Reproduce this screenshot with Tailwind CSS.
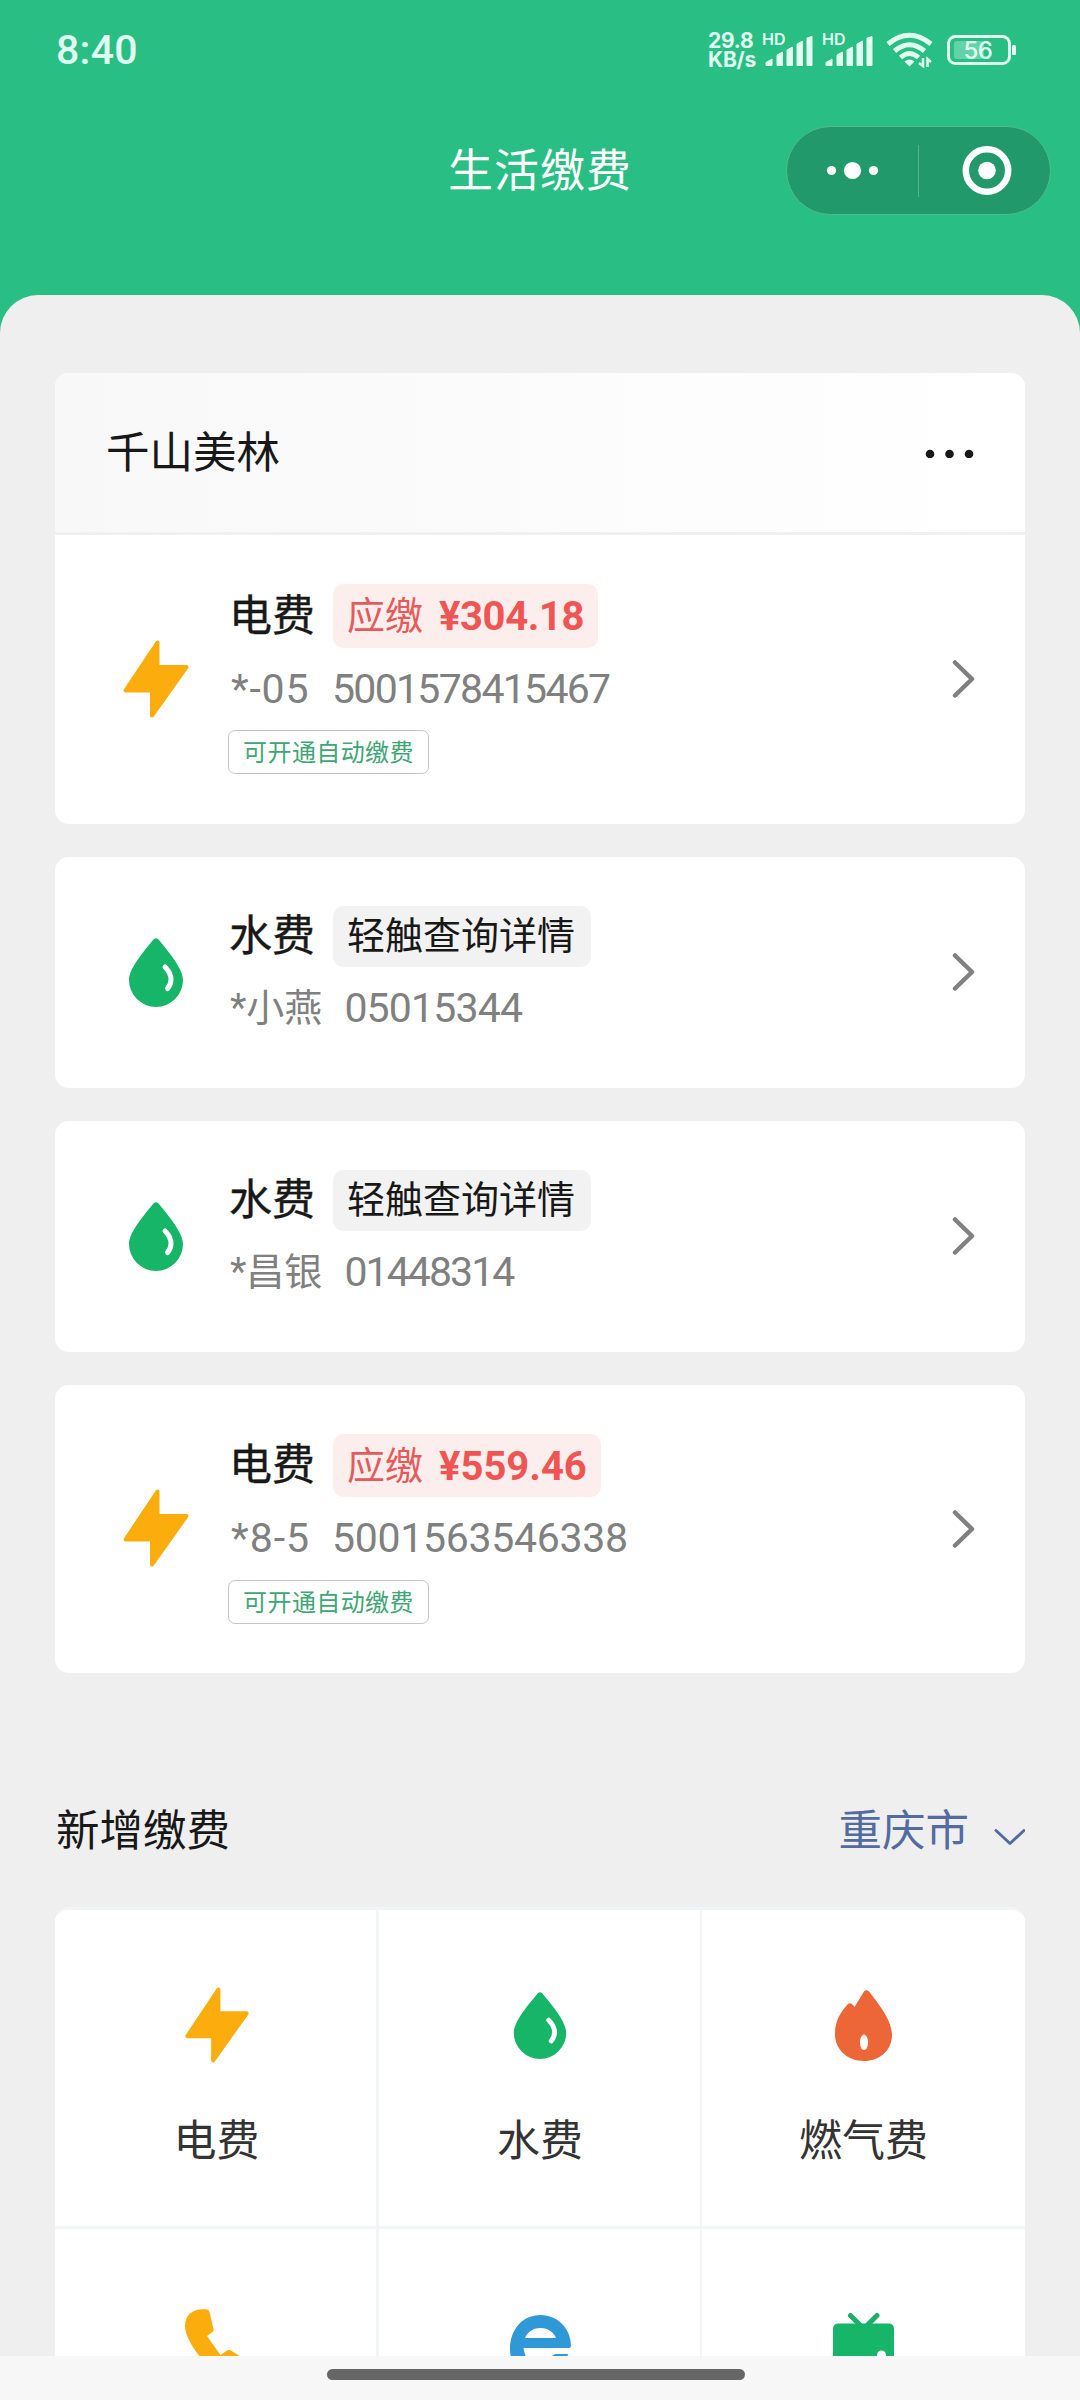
<!DOCTYPE html>
<html lang="zh-CN">
<head>
<meta charset="utf-8">
<title>生活缴费</title>
<script src="https://cdn.jsdelivr.net/npm/@tailwindcss/browser@4"></script>
</head>
<body class="w-[1080px] h-[2400px] overflow-hidden bg-[#29be83] font-[Roboto,'Noto_Sans_CJK_SC',sans-serif] text-[#181818]">
<svg class="hidden">
  <symbol id="bolt" viewBox="0 0 66 78">
    <path d="M34.5 2.5V27H63.5L29 75.5V50.5H2.5Z" fill="#fbad0e" stroke="#fbad0e" stroke-width="4" stroke-linejoin="round"/>
  </symbol>
  <symbol id="drop" viewBox="0 0 54 69">
    <path d="M24.5 1.5Q27-1 29.500 1.500C38 12 54 30 54 42A27 27 0 0 1 0 42C0 30 16 12 24.500 1.500Z" fill="#17b567"/>
    <path d="M36 29Q42 35 42 41.500Q42 46.500 38.500 50.500" fill="none" stroke="#fff" stroke-width="5" stroke-linecap="round"/>
  </symbol>
  <symbol id="flame" viewBox="0 0 57 71">
    <path d="M12.500 14.500Q15.500 12 18 15L19.500 17L29 1.500Q31.500-1 34 1.500C41 11 57 29 57 45C57 61 44 71 29 71C13 71 0 60 0 44C0 31 5 23 12.500 14.500Z" fill="#ec6637"/>
    <path d="M29 44.500C31.500 45 33 48.500 33 52.500S31.500 60 29 60S25 56.500 25 52.500S26.500 45 29 44.500Z" fill="#fff"/>
  </symbol>
  <symbol id="chevron" viewBox="0 0 24 40">
    <path d="M3 3.500L20 20L3 36.500" fill="none" stroke="#808080" stroke-width="4.500" stroke-linecap="round" stroke-linejoin="round"/>
  </symbol>
  <symbol id="signal" viewBox="0 0 48 30">
    <path d="M1 29.500V26.500L7 23V29.500ZM12 29.500V19L17.500 16V29.500ZM22 29.500V14L27.500 11V29.500ZM32 29.500V8L37.500 5V29.500ZM42 29.500V2L47 .5V29.500Z" fill="#e0fff2" stroke="#e0fff2" stroke-width="1" stroke-linejoin="round"/>
  </symbol>
</svg>

<!-- Status bar -->
<header class="h-[295px] flex flex-col text-[#e0fff2]">
  <div class="h-[100px] flex items-center pl-[56px] pr-[63px]">
    <span class="text-[41px] leading-[40px] font-medium tracking-[0.300px]">8:40</span>
    <div class="ml-auto flex items-center">
      <div class="w-[54px] font-[Inter,sans-serif] text-[21px] leading-[19px] font-bold tracking-[-0.2px]"><div>29.8</div><div>KB/s</div></div>
      <div class="relative w-[60px] h-[32px]">
        <span class="absolute left-0 top-[-1px] font-[Inter,sans-serif] text-[16px] leading-[13px] font-semibold">HD</span>
        <svg class="absolute left-[3px] top-[2px] w-[48px] h-[30px]"><use href="#signal"/></svg>
      </div>
      <div class="relative w-[60px] h-[32px]">
        <span class="absolute left-0 top-[-1px] font-[Inter,sans-serif] text-[16px] leading-[13px] font-semibold">HD</span>
        <svg class="absolute left-[3px] top-[2px] w-[48px] h-[30px]"><use href="#signal"/></svg>
      </div>
      <svg class="w-[47px] h-[36px] ml-[4px]" viewBox="0 0 47 36" fill="none" stroke="#e0fff2" stroke-width="5">
        <path d="M2 12Q23.500-5.500 45 12M8.500 19Q23.500 6.500 38.500 19M14.500 25.500Q23.500 17.500 32.500 25.500"/>
        <path d="M18.500 29.500Q23.500 25.500 28.500 29.500L23.500 34.500Z" fill="#e0fff2" stroke="none"/>
        <path d="M37 26V34L33 31M41.500 35V27L45 30" stroke-width="2.500"/>
      </svg>
      <div class="relative w-[70px] h-[32px] ml-[14px]">
        <svg class="w-[70px] h-[32px]" viewBox="0 0 70 32">
          <rect x="1.500" y="2.500" width="61" height="27" rx="7" fill="none" stroke="#e0fff2" stroke-width="3"/>
          <rect x="7" y="7" width="30" height="18" rx="3" fill="#e0fff2" fill-opacity=".32"/>
          <rect x="65" y="11" width="4" height="10" rx="1.500" fill="#e0fff2"/>
        </svg>
        <span class="absolute left-[9px] top-0 w-[44px] text-center font-[Inter,sans-serif] text-[24px] leading-[33px] font-medium tracking-[-0.500px]">56</span>
      </div>
    </div>
  </div>
  <!-- Navigation bar -->
  <div class="h-[141px] grid grid-cols-3 items-center text-white">
    <div></div>
    <h1 class="text-center text-[45px] leading-[60px] tracking-[1px] whitespace-nowrap pt-[2px]">生活缴费</h1>
    <div class="justify-self-end mr-[29px] w-[265px] h-[89px] rounded-full bg-[#22996a] border border-[#4fbc8f] flex items-center">
      <svg class="w-[131px] h-[60px]" viewBox="0 0 131 60" fill="#fff"><circle cx="44.500" cy="29.500" r="4.600"/><circle cx="65.500" cy="29.500" r="8.600"/><circle cx="86.500" cy="29.500" r="4.600"/></svg>
      <div class="w-px h-[52px] bg-[#4fb58c]"></div>
      <svg class="w-[131px] h-[60px]" viewBox="0 0 131 60"><circle cx="68" cy="29.500" r="21.200" fill="none" stroke="#fff" stroke-width="6.500"/><circle cx="68" cy="29.500" r="8.800" fill="#fff"/></svg>
    </div>
  </div>
</header>

<main class="h-[2061px] overflow-hidden rounded-t-[38px] bg-[#efefef] px-[55px] pt-[78px]">
  <div class="flex flex-col gap-[33px]">
    <!-- Household -->
    <section class="rounded-[14px] bg-white overflow-hidden">
      <div class="h-[162px] flex items-center justify-between pl-[51px] pr-[51px] bg-linear-to-r from-[#f8f8f8] to-white border-b-[3px] border-[#f0f0f0]">
        <h2 class="text-[43.500px] leading-[60px] pt-[2px]">千山美林</h2>
        <svg class="w-[49px] h-[10px]" viewBox="0 0 49 10" fill="#181818"><circle cx="5" cy="6" r="4.300"/><circle cx="24.500" cy="6" r="4.300"/><circle cx="44" cy="6" r="4.300"/></svg>
      </div>
      <div class="h-[289px] flex items-center pr-[49px]">
        <svg class="w-[66px] h-[78px] ml-[68px] mb-[2px]"><use href="#bolt"/></svg>
        <div class="ml-[39px] self-start pt-[49px]">
          <div class="h-[64px] flex items-center gap-[18px]">
            <span class="text-[43px] leading-[64px] pl-px [-webkit-text-stroke:0.4px_#181818]">电费</span>
            <span class="h-[64px] w-[265px] rounded-[10px] bg-[#fdeeee] px-[14px] text-[38px] leading-[65px] text-[#e35b5a] flex"><span>应缴</span><span class="ml-[16px] text-[40px] font-bold text-[#ef5552] tracking-[-0.400px]">¥304.18</span></span>
          </div>
          <div class="h-[48px] mt-[17px] pl-[3px] flex text-[41px] leading-[48px] text-[#808080]"><span class="w-[101px] tracking-[0.800px]">*-05</span><span class="tracking-[-1.700px]">5001578415467</span></div>
          <div class="mt-[17px] w-[201px] h-[44px] rounded-[7px] border border-[#c6c6c6] text-center text-[24px] leading-[44px] tracking-[0.400px] text-[#3fa675]">可开通自动缴费</div>
        </div>
        <svg class="w-[24px] h-[40px] ml-auto mb-[2px]"><use href="#chevron"/></svg>
      </div>
    </section>

    <section class="h-[231px] rounded-[14px] bg-white flex items-center pr-[49px]">
      <svg class="w-[54px] h-[69px] ml-[74px]"><use href="#drop"/></svg>
      <div class="ml-[45px] self-start pt-[49px]">
        <div class="h-[61px] flex items-center gap-[18px]">
          <span class="text-[43px] leading-[61px] pl-px [-webkit-text-stroke:0.4px_#181818]">水费</span>
          <span class="h-[61px] w-[258px] rounded-[10px] bg-[#f2f2f2] pl-[14px] text-[38px] leading-[61px]">轻触查询详情</span>
        </div>
        <div class="h-[48px] mt-[17px] pl-[2px] flex gap-[22px] text-[38px] leading-[48px] text-[#808080]"><span>*小燕</span><span class="text-[41px] tracking-[-0.800px]">05015344</span></div>
      </div>
      <svg class="w-[24px] h-[40px] ml-auto mb-[2px]"><use href="#chevron"/></svg>
    </section>

    <section class="h-[231px] rounded-[14px] bg-white flex items-center pr-[49px]">
      <svg class="w-[54px] h-[69px] ml-[74px]"><use href="#drop"/></svg>
      <div class="ml-[45px] self-start pt-[49px]">
        <div class="h-[61px] flex items-center gap-[18px]">
          <span class="text-[43px] leading-[61px] pl-px [-webkit-text-stroke:0.4px_#181818]">水费</span>
          <span class="h-[61px] w-[258px] rounded-[10px] bg-[#f2f2f2] pl-[14px] text-[38px] leading-[61px]">轻触查询详情</span>
        </div>
        <div class="h-[48px] mt-[17px] pl-[2px] flex gap-[22px] text-[38px] leading-[48px] text-[#808080]"><span>*昌银</span><span class="text-[41px] tracking-[-1.900px]">01448314</span></div>
      </div>
      <svg class="w-[24px] h-[40px] ml-auto mb-[2px]"><use href="#chevron"/></svg>
    </section>

    <section class="h-[288px] rounded-[14px] bg-white flex items-center pr-[49px]">
      <svg class="w-[66px] h-[78px] ml-[68px] mb-[2px]"><use href="#bolt"/></svg>
      <div class="ml-[39px] self-start pt-[49px]">
        <div class="h-[63px] flex items-center gap-[18px]">
          <span class="text-[43px] leading-[63px] pl-px [-webkit-text-stroke:0.4px_#181818]">电费</span>
          <span class="h-[63px] w-[268px] rounded-[10px] bg-[#fdeeee] px-[14px] text-[38px] leading-[65px] text-[#e35b5a] flex"><span>应缴</span><span class="ml-[16px] text-[40px] font-bold text-[#ef5552]">¥559.46</span></span>
        </div>
        <div class="h-[48px] mt-[17px] pl-[3px] flex text-[41px] leading-[48px] text-[#808080]"><span class="w-[101px] tracking-[1px]">*8-5</span><span class="tracking-[-0.300px]">5001563546338</span></div>
        <div class="mt-[18px] w-[201px] h-[44px] rounded-[7px] border border-[#c6c6c6] text-center text-[24px] leading-[44px] tracking-[0.400px] text-[#3fa675]">可开通自动缴费</div>
      </div>
      <svg class="w-[24px] h-[40px] ml-auto"><use href="#chevron"/></svg>
    </section>
  </div>

  <!-- New payment -->
  <div class="mt-[126px] h-[108px] pt-[3px] flex items-start justify-between">
    <h2 class="text-[43.500px] leading-[60px] pl-px">新增缴费</h2>
    <div class="flex items-center text-[43.500px] leading-[60px] text-[#546b9f]">
      <span>重庆市</span>
      <svg class="w-[32px] h-[20px] ml-[24px] mt-[10px]" viewBox="0 0 32 20"><path d="M3 3.500L17 16.500L31 3.500" fill="none" stroke="#546b9f" stroke-width="3" stroke-linecap="round" stroke-linejoin="round"/></svg>
    </div>
  </div>
  <div class="grid grid-cols-[321px_321px_323px] grid-rows-[316px_316px] gap-x-[2.500px] gap-y-[3px] rounded-t-[14px] border-t-[3px] border-[#f3f4f6] bg-[#f3f4f6] overflow-hidden text-[43px] leading-[60px] text-[#333]">
    <div class="bg-white flex flex-col items-center pt-[77px] pl-[2px]">
      <svg class="w-[66px] h-[76px]"><use href="#bolt"/></svg>
      <span class="mt-[48px]">电费</span>
    </div>
    <div class="bg-white flex flex-col items-center pt-[82px] pl-[2px]">
      <svg class="w-[54px] h-[67px]"><use href="#drop"/></svg>
      <span class="mt-[52px]">水费</span>
    </div>
    <div class="bg-white flex flex-col items-center pt-[80px]">
      <svg class="w-[57px] h-[71px]"><use href="#flame"/></svg>
      <span class="mt-[50px]">燃气费</span>
    </div>
    <div class="bg-white flex flex-col items-center pt-[80px] pl-[2px]">
      <svg class="w-[64px] h-[64px]" viewBox="0 0 64 64"><path d="M0 17C0 5 9-1 22 .5Q24 .7 24.500 3L28.500 20Q29 22 27.500 23L22 27L35.500 46L42 41.500Q44 40.300 46 41.500L60 50.500Q62 52 61 55L50 64H28C22 56 0 33 0 17Z" fill="#fbad0e"/></svg>
    </div>
    <div class="bg-white flex flex-col items-center pt-[86px] pl-[2px]">
      <svg class="w-[61px] h-[64px]" viewBox="0 0 61 64"><path fill-rule="evenodd" d="M0 34C0 14 13 0 30.500 0S61 14 61 31Q61 33 59 33H13.500C15 44 20 49 30 49Q37 49 40 46Q42 39 46 39H58C55 54 45 63 30.500 63C13 63 0 52 0 34ZM15 23H46C43 16 37 13 30.500 13S18 16 15 23Z" fill="#2f98d7"/></svg>
    </div>
    <div class="bg-white flex flex-col items-center pt-[83px]">
      <svg class="w-[61px] h-[64px]" viewBox="0 0 61 64"><path d="M17.500 3.500L27 13M44 3.500L34.500 13" stroke="#20ac6b" stroke-width="5" stroke-linecap="round"/><rect y="11.500" width="61" height="50" rx="5" fill="#17b567"/><circle cx="48.500" cy="43" r="4.500" fill="#fff"/></svg>
    </div>
  </div>
</main>
<footer class="h-[44px] bg-[#f7f7f7] flex justify-center pt-[13px]">
  <div class="w-[418px] h-[11px] rounded-full bg-[#666] -ml-[8px]"></div>
</footer>
</body>
</html>
